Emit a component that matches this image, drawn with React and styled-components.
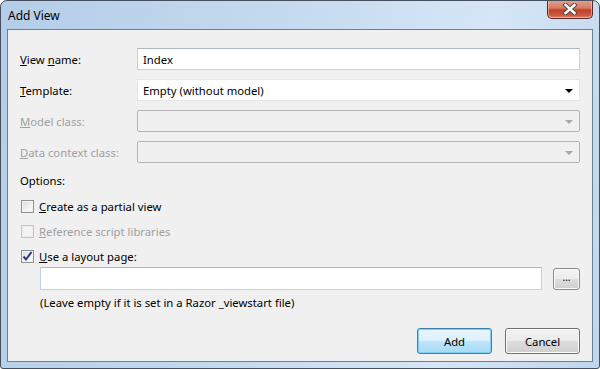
import styled, { createGlobalStyle } from 'styled-components'

const GlobalStyle = createGlobalStyle`
    html, body {
        margin: 0;
        padding: 0;
        background: #ffffff;
    }
    body {
        font-family: 'Segoe UI', 'Noto Sans', 'Open Sans', sans-serif;
        font-size: 11.3px;
        color: #000000;
    }
`;

export default function App (){
    return(
        <>
            <GlobalStyle />
            <Frame>
                <TitleBar>
                    <Title>Add View</Title>
                    <CloseButton aria-label='Close'>
                        <svg width='16' height='12' viewBox='0 0 16 12'>
                            <path d='M3.5 2 L12.5 10 M12.5 2 L3.5 10' stroke='#5a4a4a' strokeWidth='4.4' strokeLinecap='square' />
                            <path d='M3.5 2 L12.5 10 M12.5 2 L3.5 10' stroke='#ffffff' strokeWidth='2.4' strokeLinecap='square' />
                        </svg>
                    </CloseButton>
                </TitleBar>
                <Client>
                    <Form>
                        <Label><u>V</u>iew <u>n</u>ame:</Label>
                        <TextBox>Index</TextBox>
                        <Label><u>T</u>emplate:</Label>
                        <Combo>
                            <span>Empty (without model)</span>
                            <Arrow />
                        </Combo>
                        <Label disabled><u>M</u>odel class:</Label>
                        <Combo disabled><span></span><Arrow disabled /></Combo>
                        <Label disabled><u>D</u>ata context class:</Label>
                        <Combo disabled><span></span><Arrow disabled /></Combo>
                    </Form>

                    <Options>Options:</Options>
                    <CheckRow>
                        <Box />
                        <span><u>C</u>reate as a partial view</span>
                    </CheckRow>
                    <CheckRow disabled>
                        <Box disabled />
                        <span><u>R</u>eference script libraries</span>
                    </CheckRow>
                    <CheckRow>
                        <Box>
                            <svg width='11' height='11' viewBox='0 0 11 11'>
                                <path d='M1.5 5.5 L4 8.5 L9.5 1' fill='none' stroke='#2a3a8c' strokeWidth='2' />
                            </svg>
                        </Box>
                        <span><u>U</u>se a layout page:</span>
                    </CheckRow>

                    <LayoutRow>
                        <TextBox wide></TextBox>
                        <BrowseButton>...</BrowseButton>
                    </LayoutRow>
                    <Hint>(Leave empty if it is set in a Razor _viewstart file)</Hint>

                    <Buttons>
                        <Button primary>Add</Button>
                        <Button>Cancel</Button>
                    </Buttons>
                </Client>
            </Frame>
        </>
    )
}

const Frame = styled.div`
    box-sizing: border-box;
    width: 600px;
    height: 369px;
    border: 1px solid #46505c;
    border-radius: 7px 7px 3px 3px;
    background: linear-gradient(100deg, #b4cde8 0%, #c3d9ee 40%, #d6e6f6 75%, #c0d6ed 100%);
    display: flex;
    flex-direction: column;
    overflow: hidden;
`;

const TitleBar = styled.div`
    height: 28px;
    display: flex;
    justify-content: space-between;
    align-items: flex-start;
    padding: 0 6px 0 7px;
`;

const Title = styled.div`
    margin-top: 6px;
    font-size: 12px;
    color: #000000;
`;

const CloseButton = styled.div`
    box-sizing: border-box;
    width: 46px;
    height: 19px;
    margin-top: -1px;
    border: 1px solid #5a2a28;
    border-top: none;
    border-radius: 0 0 5px 5px;
    background: linear-gradient(180deg, #e6a391 0%, #d77a62 45%, #c1402a 55%, #c85a40 85%, #dd8a6c 100%);
    box-shadow: inset 0 0 0 1px rgba(255, 220, 210, 0.5);
    display: flex;
    align-items: center;
    justify-content: center;
`;

const Client = styled.div`
    flex: 1;
    margin: 0 6px 6px 6px;
    border: 1px solid #6d7f93;
    background: #f0f0f0;
    padding: 18px 12px 0 12px;
    display: flex;
    flex-direction: column;
`;

const Form = styled.div`
    display: grid;
    grid-template-columns: 117px 1fr;
    grid-auto-rows: 22px;
    row-gap: 9px;
    align-items: center;
`;

const Label = styled.div`
    color: ${p => p.disabled ? '#a0a0a0' : '#000000'};
`;

const TextBox = styled.div`
    box-sizing: border-box;
    height: ${p => p.wide ? '23px' : '22px'};
    flex: ${p => p.wide ? 1 : 'none'};
    background: #ffffff;
    border: 1px solid #c5d2de;
    border-top-color: #abb7c4;
    padding: 0 5px;
    display: flex;
    align-items: center;
`;

const Combo = styled.div`
    box-sizing: border-box;
    height: 22px;
    background: ${p => p.disabled ? '#f0f0f0' : '#ffffff'};
    border: 1px solid ${p => p.disabled ? '#b4b4b4' : '#e6e6e6'};
    border-radius: ${p => p.disabled ? '2px' : '0'};
    padding: 0 6px 0 5px;
    display: flex;
    align-items: center;
    justify-content: space-between;
`;

const Arrow = styled.div`
    width: 0;
    height: 0;
    border-left: 4px solid transparent;
    border-right: 4px solid transparent;
    border-top: 4px solid ${p => p.disabled ? '#a8a8a8' : '#000000'};
    margin-top: 1px;
`;

const Options = styled.div`
    margin-top: 10px;
    height: 16px;
    line-height: 16px;
`;

const CheckRow = styled.div`
    display: flex;
    align-items: center;
    gap: 5px;
    height: 16px;
    margin-top: 9px;
    padding-left: 1px;
    color: ${p => p.disabled ? '#a0a0a0' : '#000000'};
`;

const Box = styled.div`
    box-sizing: border-box;
    width: 13px;
    height: 13px;
    border: 1px solid ${p => p.disabled ? '#c6c6c6' : '#8e8f8f'};
    background: ${p => p.disabled
        ? '#f4f4f4'
        : 'linear-gradient(135deg, #dcdcdc 0%, #f2f2f2 60%, #ffffff 100%)'};
    box-shadow: inset 0 0 0 1px ${p => p.disabled ? '#ececec' : '#f4f4f4'};
    display: flex;
    align-items: center;
    justify-content: center;
`;

const LayoutRow = styled.div`
    display: flex;
    align-items: center;
    gap: 11px;
    margin-top: 3px;
    padding-left: 20px;
`;

const BrowseButton = styled.div`
    box-sizing: border-box;
    width: 27px;
    height: 22px;
    border: 1px solid #8a8a8a;
    border-radius: 3px;
    background: linear-gradient(180deg, #f4f4f4 0%, #ebebeb 50%, #dddddd 51%, #d0d0d0 100%);
    box-shadow: inset 0 0 0 1px #fbfbfb;
    display: flex;
    align-items: center;
    justify-content: center;
    font-size: 10px;
    line-height: 10px;
    padding-bottom: 3px;
`;

const Hint = styled.div`
    margin-top: 5px;
    padding-left: 20px;
    height: 16px;
    line-height: 16px;
`;

const Buttons = styled.div`
    display: flex;
    justify-content: flex-end;
    gap: 13px;
    margin-top: 17px;
`;

const Button = styled.div`
    box-sizing: border-box;
    width: 75px;
    height: 26px;
    border: 1px solid ${p => p.primary ? '#3c7fb1' : '#707070'};
    border-radius: 3px;
    background: ${p => p.primary
        ? 'linear-gradient(180deg, #eaf6fd 0%, #d9f0fc 50%, #bee6fd 51%, #a7d9f5 100%)'
        : 'linear-gradient(180deg, #f2f2f2 0%, #ebebeb 50%, #dddddd 51%, #cfcfcf 100%)'};
    box-shadow: inset 0 0 0 1px ${p => p.primary ? '#7fd0f2' : '#fcfcfc'};
    display: flex;
    align-items: center;
    justify-content: center;
`;
